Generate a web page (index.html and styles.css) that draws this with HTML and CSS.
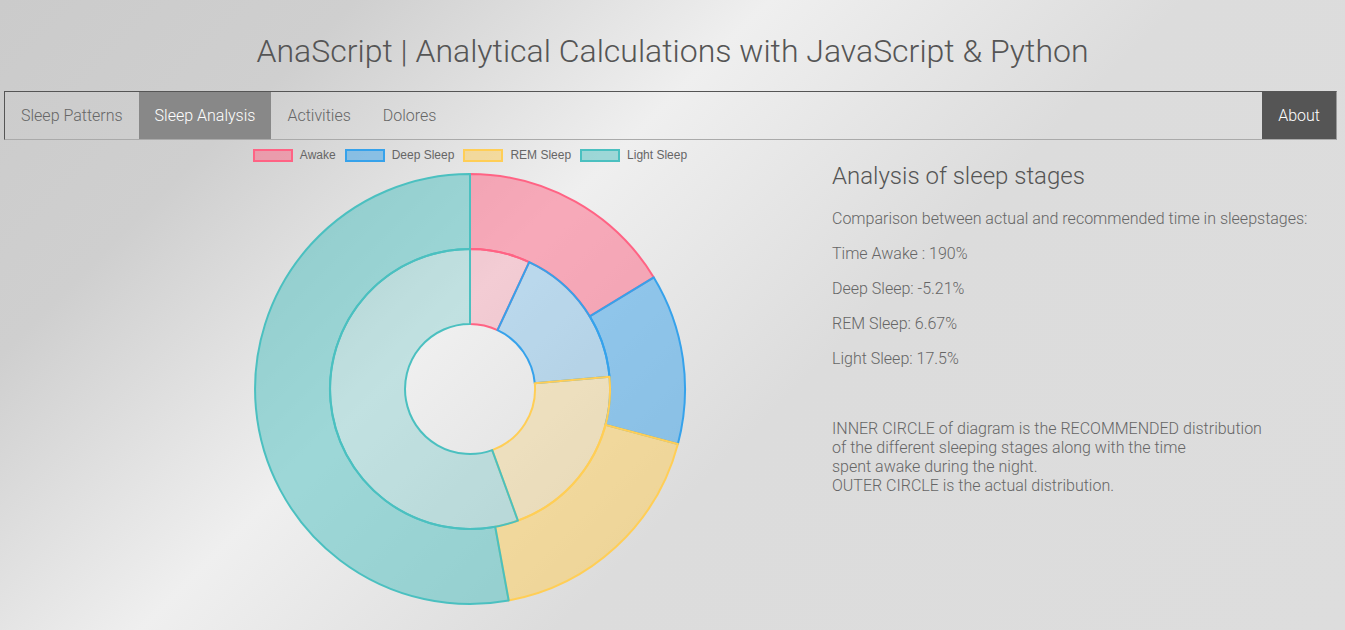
FILE: index.html
```html
<!DOCTYPE html>
<html lang="en">
<head>
<meta charset="utf-8">
<title>AnaScript</title>
<link rel="stylesheet" href="styles.css">
</head>
<body>
<header class="site-header">
  <h1 class="site-title">AnaScript | Analytical Calculations with JavaScript &amp; Python</h1>
</header>
<nav class="topnav">
  <a class="nav-item" href="#">Sleep Patterns</a>
  <a class="nav-item active" href="#">Sleep Analysis</a>
  <a class="nav-item" href="#">Activities</a>
  <a class="nav-item" href="#">Dolores</a>
  <a class="nav-item about" href="#">About</a>
</nav>
<main class="content">
  <section class="chart-col">
    <div class="chart">
      <div class="legend">
        <span class="legend-item"><span class="swatch swatch-awake"></span>Awake</span>
        <span class="legend-item"><span class="swatch swatch-deep"></span>Deep Sleep</span>
        <span class="legend-item"><span class="swatch swatch-rem"></span>REM Sleep</span>
        <span class="legend-item"><span class="swatch swatch-light"></span>Light Sleep</span>
      </div>
      <svg class="donut" width="440" height="440" viewBox="0 0 440 440">
        <!-- outer ring: actual distribution -->
        <path class="seg awake outer" d="M220 4 A215 215 0 0 1 403.8 107.4 L339.7 146.3 A140 140 0 0 0 220 79 Z"/>
        <path class="seg deep outer" d="M403.8 107.4 A215 215 0 0 1 427.9 273.95 L355.4 254.8 A140 140 0 0 0 339.7 146.3 Z"/>
        <path class="seg rem outer" d="M427.9 273.95 A215 215 0 0 1 258.7 430.5 L245.2 356.7 A140 140 0 0 0 355.4 254.8 Z"/>
        <path class="seg light outer" d="M258.7 430.5 A215 215 0 1 1 220 4 L220 79 A140 140 0 1 0 245.2 356.7 Z"/>
        <!-- inner ring: recommended distribution -->
        <path class="seg awake inner" d="M220 79 A140 140 0 0 1 279.2 92.1 L247.5 160.1 A65 65 0 0 0 220 154 Z"/>
        <path class="seg deep inner" d="M279.2 92.1 A140 140 0 0 1 359.5 206.8 L284.8 213.3 A65 65 0 0 0 247.5 160.1 Z"/>
        <path class="seg rem inner" d="M359.5 206.8 A140 140 0 0 1 267.9 350.6 L242.2 280.1 A65 65 0 0 0 284.8 213.3 Z"/>
        <path class="seg light inner" d="M267.9 350.6 A140 140 0 1 1 220 79 L220 154 A65 65 0 1 0 242.2 280.1 Z"/>
      </svg>
    </div>
  </section>
  <section class="info-col">
    <h2 class="info-title">Analysis of sleep stages</h2>
    <p class="info-text">Comparison between actual and recommended time in sleepstages:</p>
    <p class="info-text">Time Awake : 190%</p>
    <p class="info-text">Deep Sleep: -5.21%</p>
    <p class="info-text">REM Sleep: 6.67%</p>
    <p class="info-text">Light Sleep: 17.5%</p>
    <p class="info-text note">INNER CIRCLE of diagram is the RECOMMENDED distribution<br>of the different sleeping stages along with the time<br>spent awake during the night.<br>OUTER CIRCLE is the actual distribution.</p>
  </section>
</main>
</body>
</html>
```

FILE: styles.css
```css
html {
  min-height: 100%;
  background: linear-gradient(135deg, #cbcbcb 0%, #cfcfcf 18%, #efefef 39%, #dcdcdc 60%, #dddddd 100%);
}

body {
  margin: 0;
  font-family: Roboto, "Noto Sans", sans-serif;
  font-weight: 300;
  color: #666;
}

.site-header {
  height: 91px;
  display: flex;
  align-items: center;
  justify-content: center;
}

.site-title {
  margin: 0;
  padding-top: 10px;
  font-size: 32px;
  font-weight: 300;
  color: #555;
  line-height: 1;
}

.topnav {
  display: flex;
  height: 47px;
  margin: 0 8px 0 4px;
  border-style: solid;
  border-width: 1px;
  border-color: #555 #999 #aaa #555;
}

.nav-item {
  display: flex;
  align-items: center;
  padding: 0 16px;
  font-size: 16px;
  color: #666;
  text-decoration: none;
}

.nav-item.active {
  background: #888;
  color: #fff;
}

.nav-item.about {
  margin-left: auto;
  background: #555;
  color: #fff;
}

.content {
  display: flex;
  padding-left: 4px;
}

.chart-col {
  width: 828px;
}

.chart {
  width: 440px;
  margin-left: 246px;
}

.legend {
  height: 30px;
  padding-top: 8px;
  box-sizing: border-box;
  display: flex;
  justify-content: center;
  font-family: "Liberation Sans", Arial, sans-serif;
  font-weight: 400;
  font-size: 12px;
  color: #666;
}

.legend-item {
  display: flex;
  align-items: center;
  height: 14px;
  margin-right: 9px;
}

.legend-item:last-child {
  margin-right: 0;
}

.swatch {
  width: 36px;
  height: 9px;
  margin-right: 7px;
  border: 2px solid;
}

.swatch-awake { background: rgba(255, 99, 132, 0.5); border-color: rgb(255, 99, 132); }
.swatch-deep { background: rgba(54, 162, 235, 0.5); border-color: rgb(54, 162, 235); }
.swatch-rem { background: rgba(255, 206, 86, 0.5); border-color: rgb(255, 206, 86); }
.swatch-light { background: rgba(75, 192, 192, 0.5); border-color: rgb(75, 192, 192); }

.donut {
  display: block;
}

.seg {
  stroke-width: 2;
  stroke-linejoin: round;
}

.seg.awake { stroke: rgb(255, 99, 132); }
.seg.deep { stroke: rgb(54, 162, 235); }
.seg.rem { stroke: rgb(255, 206, 86); }
.seg.light { stroke: rgb(75, 192, 192); }

.seg.awake.outer { fill: rgba(255, 99, 132, 0.5); }
.seg.deep.outer { fill: rgba(54, 162, 235, 0.5); }
.seg.rem.outer { fill: rgba(255, 206, 86, 0.5); }
.seg.light.outer { fill: rgba(75, 192, 192, 0.5); }

.seg.awake.inner { fill: rgba(255, 99, 132, 0.25); }
.seg.deep.inner { fill: rgba(54, 162, 235, 0.28); }
.seg.rem.inner { fill: rgba(255, 206, 86, 0.28); }
.seg.light.inner { fill: rgba(75, 192, 192, 0.28); }

.info-col {
  padding-top: 22px;
}

.info-title {
  margin: 0 0 19px;
  font-size: 24px;
  font-weight: 300;
  line-height: 28px;
  color: #555;
}

.info-text {
  margin: 16px 0;
  font-size: 16px;
  line-height: 19px;
  color: #666;
}

.info-text:first-of-type {
  margin-top: 0;
}

.info-text.note {
  margin-top: 51px;
}
```
